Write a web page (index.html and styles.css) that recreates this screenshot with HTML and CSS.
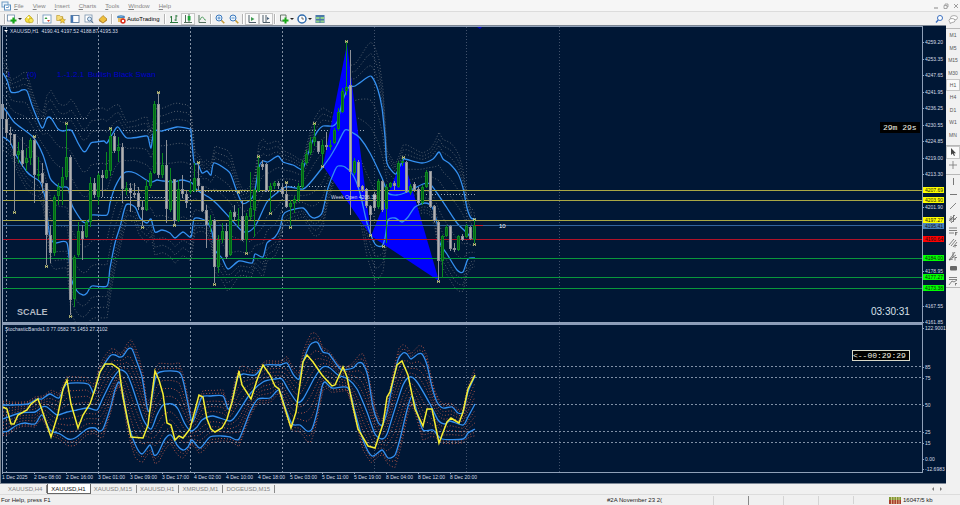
FILE: index.html
```html
<!DOCTYPE html>
<html lang="en">
<head>
<meta charset="UTF-8">
<meta name="viewport" content="width=device-width, initial-scale=1.0">
<title>XAUUSD,H1</title>
<link rel="stylesheet" href="styles.css">
</head>
<body>

<nav class="menu">
    <svg class="icon" viewBox="0 0 10 10"><rect x="1" y="1" width="6" height="5" fill="#eaf3fb" stroke="#6f9cc4"/><rect x="3.5" y="4" width="6" height="5" fill="#fff" stroke="#5b8fc0"/><path d="M5 7l1-1 1 1 1-2" fill="none" stroke="#3b78b5" stroke-width=".7"/></svg>
    <button><u>F</u>ile</button>
    <button><u>V</u>iew</button>
    <button><u>I</u>nsert</button>
    <button><u>C</u>harts</button>
    <button><u>T</u>ools</button>
    <button><u>W</u>indow</button>
    <button><u>H</u>elp</button>
    <div class="window-buttons">
        <button aria-label="Minimize"><svg viewBox="0 0 6 6"><path d="M1 5h4" stroke="#888" fill="none"/></svg></button>
        <button aria-label="Restore"><svg viewBox="0 0 6 6"><path d="M2 2V1h3v3H4M1 2.5h3v3H1z" stroke="#888" stroke-width=".7" fill="none"/></svg></button>
        <button aria-label="Close"><svg viewBox="0 0 6 6"><path d="M1 1l4 4M5 1L1 5" stroke="#888" stroke-width=".8" fill="none"/></svg></button>
    </div>
</nav>

<div class="toolbar">
    <span class="grip"></span>
    <button class="tool" aria-label="New chart"><svg class="icon" viewBox="0 0 10 10"><rect x=".5" y="1" width="7" height="6" fill="#fff" stroke="#6b8aa8" stroke-width=".8"/><path d="M6.5 3.5v6M3.5 6.5h6" stroke="#18a818" stroke-width="2.2"/></svg><i class="arrow"></i></button>
    <button class="tool" aria-label="Profiles"><svg class="icon" viewBox="0 0 10 10"><path d="M1 5l4-4 3 3-2 5-4-1z" fill="#f4df3a" stroke="#b59a1a" stroke-width=".6"/><circle cx="7" cy="6.5" r="2.3" fill="#f7e65a" stroke="#b59a1a" stroke-width=".6"/><circle cx="4.2" cy="3.5" r=".9" fill="#fff"/></svg></button>
    <span class="grip"></span>
    <button class="tool" aria-label="Market Watch"><svg class="icon" viewBox="0 0 10 10"><rect x="1" y="1" width="8" height="8" fill="#fff" stroke="#6b93ba" stroke-width=".8"/><path d="M2.5 5l1.5-2 1.5 2z" fill="#2a9a3a"/><path d="M5 6l1.5 2L8 6z" fill="#d2452c"/></svg></button>
    <button class="tool" aria-label="Data Window"><svg class="icon" viewBox="0 0 10 10"><path d="M.7 1.5h3l1 1h2v4h-6z" fill="#f6dc7a" stroke="#b38e22" stroke-width=".6"/><path d="M6.5 3.5l.9 2 2.1.2-1.6 1.4.5 2.1-1.9-1.1-1.9 1.1.5-2.1L3.5 5.7l2.1-.2z" fill="#f8cf3d" stroke="#a9821b" stroke-width=".5"/></svg></button>
    <button class="tool" aria-label="Navigator"><svg class="icon" viewBox="0 0 10 10"><rect x="1" y="1.5" width="8" height="7" fill="#fff" stroke="#55779c" stroke-width=".9"/><rect x="1" y="1.5" width="2.2" height="7" fill="#4477b4"/></svg></button>
    <button class="tool" aria-label="Terminal"><svg class="icon" viewBox="0 0 10 10"><rect x="1" y="1" width="7" height="7" fill="#fff" stroke="#7892ac" stroke-width=".8"/><circle cx="5.5" cy="5" r="2" fill="#dbeeff" stroke="#44688e" stroke-width=".8"/><path d="M7 6.5l2.2 2.6" stroke="#44688e"/></svg></button>
    <button class="tool" aria-label="Strategy Tester"><svg class="icon" viewBox="0 0 10 10"><path d="M1 5.5L5 1.5l4 3.5-4 4z" fill="#efbf3c" stroke="#98701a" stroke-width=".6"/><path d="M1 5.5l4 3.5 4-4v1.5l-4 3-4-2.5z" fill="#b97f1c"/></svg></button>
    <span class="grip"></span>
    <button class="tool auto"><svg class="icon" viewBox="0 0 10 10"><ellipse cx="5" cy="3" rx="4" ry="1.8" fill="#4b86bc"/><path d="M2 4h6v4H2z" fill="#e7bd63"/><path d="M3 3q2-3 4 0z" fill="#6fa9da"/><circle cx="7" cy="7" r="2.7" fill="#dd3424"/><path d="M6 6h2v2H6z" fill="#fff"/></svg>AutoTrading</button>
    <span class="grip"></span>
    <button class="tool" aria-label="Bar chart"><svg class="icon" viewBox="0 0 10 10"><path d="M1 8.5h8M2.5 2v7M1 3h1.5M7 1v6M7 2h1.5M5.5 6H7" stroke="#2c7a3f" fill="none"/></svg></button>
    <button class="tool active" aria-label="Candlesticks"><svg class="icon" viewBox="0 0 10 10"><path d="M1 8.5h8M2.5 1v8M6 0v8" stroke="#54705e" fill="none"/><rect x="4.7" y="2" width="2.8" height="4.5" fill="#1fa93a"/></svg></button>
    <button class="tool" aria-label="Line chart"><svg class="icon" viewBox="0 0 10 10"><path d="M2 1v7.5h7" stroke="#54705e" fill="none"/><path d="M3 6q2-5 3.5-2T9 6" stroke="#3f9450" fill="none" stroke-width=".8"/></svg></button>
    <span class="grip"></span>
    <button class="tool" aria-label="Zoom in"><svg class="icon" viewBox="0 0 10 10"><path d="M6.300 6.300l3 3" stroke="#c69a35" stroke-width="1.6"/><circle cx="4" cy="4" r="3" fill="#e9f4fd" stroke="#3b78bd"/><path d="M2.5 4h3M4 2.5v3" stroke="#3b78bd" stroke-width=".8"/></svg></button>
    <button class="tool" aria-label="Zoom out"><svg class="icon" viewBox="0 0 10 10"><path d="M6.300 6.300l3 3" stroke="#c69a35" stroke-width="1.6"/><circle cx="4" cy="4" r="3" fill="#e9f4fd" stroke="#3b78bd"/><path d="M2.5 4h3" stroke="#3b78bd" stroke-width=".8"/></svg></button>
    <span class="grip"></span>
    <button class="tool active" aria-label="Auto scroll"><svg class="icon" viewBox="0 0 10 10"><path d="M2 1v7.5h7" stroke="#4f5f6a" fill="none"/><path d="M4 3l3.5 2L4 7z" fill="#3e9c50"/></svg></button>
    <button class="tool active" aria-label="Chart shift"><svg class="icon" viewBox="0 0 10 10"><path d="M2 1v7.5h7M5 1v7" stroke="#4f5f6a" fill="none"/><path d="M6 3l2.5 1.5L6 6z" fill="#45607c"/></svg></button>
    <span class="grip"></span>
    <button class="tool wide" aria-label="Indicators"><svg class="icon" viewBox="0 0 10 10"><path d="M1.5 1v6H5M1.5 1H7v3" stroke="#5c6d60" fill="none" stroke-width=".9"/><path d="M6.5 3.5v6M3.5 6.5h6" stroke="#18a818" stroke-width="2"/></svg><i class="arrow"></i></button>
    <button class="tool wide" aria-label="Periods"><svg class="icon" viewBox="0 0 10 10"><circle cx="5" cy="5" r="4" fill="#fff" stroke="#2f6cae" stroke-width="1.5"/><path d="M5 2.8V5h2" stroke="#333" fill="none" stroke-width=".7"/></svg><i class="arrow"></i></button>
    <button class="tool" aria-label="Templates"><svg class="icon" viewBox="0 0 10 10"><rect x=".5" y="1" width="9" height="8" fill="#4b79aa"/><path d="M1 3h3.5v2H1zM5.5 3H9v2H5.5zM1 6.5h3.5v2H1zM5.5 6.5H9v2H5.5z" fill="#8fd08a"/></svg></button>
    <div class="toolbar-right">
        <button class="tool" aria-label="Search"><svg class="icon" viewBox="0 0 10 10"><circle cx="6" cy="4" r="2.5" fill="#fff" stroke="#3b6fc0"/><path d="M4.2 6L2 8.5" stroke="#3b6fc0" stroke-width="1.4"/></svg></button>
        <button class="tool" aria-label="Chat"><svg class="icon" viewBox="0 0 10 10"><ellipse cx="6" cy="3.8" rx="3.5" ry="2.2" fill="#fff" stroke="#8a8a8a" stroke-width=".7"/><path d="M1 6.5q0-2 3-2t3 2q0 2-3 2L2 9.5V8Q1 7.5 1 6.5z" fill="#fff" stroke="#8a8a8a" stroke-width=".7"/></svg></button>
    </div>
</div>

<main class="workspace">
    <div class="chart-window">
        <svg class="chart" viewBox="0 25 946 458" role="img" aria-label="XAUUSD H1 chart">
            <rect class="back" x="0" y="25" width="946" height="458"/>
            <path class="edge" d="M0 25.500H946M.5 25V483"/>

            <!-- day separators and levels -->
            <path class="day" d="M6.500 27V472M98.500 27V472M190.500 27V472M282.500 27V472"/>
            <path class="day faint" d="M374.500 27V472M466.500 27V472M559.500 27V472"/>
            <path class="open" d="M8 118.500H89M6 130.500H366M98 197.500H190M190 191.500H282M282 186.500H326M423 194.500H476"/>
            <g id="bands"></g>
            <g class="pattern">
                <path d="M323 166L347 44L371 236Z"/>
                <path d="M371 236L403 157L439 281Z"/>
            </g>
            <g id="bandLines"></g>
            <g class="level">
                <path class="yellow" d="M3 190.500H922M3 200.500H922M3 220.500H922"/>
                <path class="blue" d="M3 225.500H922"/>
                <path class="red" d="M3 239.500H922"/>
                <path class="green" d="M3 258.500H922M3 277.500H922M3 288.500H922"/>
            </g>
            <g id="candles"></g>
            <path class="ask" d="M475 225.500H483"/>

            <!-- indicator window -->
            <path class="grid" d="M3 366.500H922M3 377.500H922M3 404.500H922M3 431.500H922M3 442.500H922"/>
            <g id="stochastic"></g>

            <path class="frame" d="M2.500 472V26.500H922.500V472.500H2.500M2 322.500H922"/>
            <path class="splitter" d="M2 324H922"/>
            <path class="frame" id="ticks"/>

            <polygon points="4,30 8,30 6,32" fill="#fff"/>
            <text class="small" x="10" y="33">XAUUSD,H1&#160; 4190.41 4197.52 4188.87 4195.33</text>
            <text class="small" x="5" y="331">StochasticBands1.0 77.0582 75.1453 27.2102</text>
            <g class="swan">
                <text x="8" y="77">I</text>
                <text x="27" y="77">(0)</text>
                <text x="57" y="77">1.-1.2.1</text>
                <text x="88" y="77">Bullish Black Swan</text>
            </g>
            <polygon points="477,27 482,27 480,29" fill="#0000c8"/>
            <text class="small" x="331" y="199">Week Open 4206.38</text>
            <text class="bar-count" x="499" y="228">10</text>
            <text class="scale" x="17" y="315">SCALE</text>
            <text class="clock" x="871" y="315">03:30:31</text>
            <rect x="880" y="122" width="40" height="11" fill="#000"/>
            <text class="mono" x="883" y="130">29m 29s</text>
            <rect x="852.500" y="350.500" width="57" height="10" fill="#000" stroke="#d8d8c8"/>
            <text class="mono" x="853" y="358">&lt;--00:29:29</text>
            <g id="axis"></g>
        </svg>

        <div class="tabs">
            <button>XAUUSD,H4</button>
            <button class="current">XAUUSD,H1</button>
            <button>XAUUSD,M15</button>
            <button>XAUUSD,H1</button>
            <button>XMRUSD,M1</button>
            <button>DOGEUSD,M15</button>
            <span class="tab-scroll"><i class="left"></i><i class="right"></i></span>
        </div>
    </div>

    <aside class="side">
        <div class="periods">
            <button>M1</button>
            <button>M5</button>
            <button>M15</button>
            <button>M30</button>
            <button class="active">H1</button>
            <button>H4</button>
            <button>D1</button>
            <button>W1</button>
            <button>MN</button>
        </div>
        <div class="pointers">
            <button class="active" aria-label="Cursor"><svg class="icon" viewBox="0 0 10 10"><path d="M3 1v7l1.7-1.5L6 9l1-.5-1.200-2.300H8z" fill="#444"/></svg></button>
            <button aria-label="Crosshair"><svg class="icon" viewBox="0 0 10 10"><path d="M5 1v8M1 5h8" stroke="#777" stroke-width=".8"/></svg></button>
        </div>
        <div class="lines">
            <button aria-label="Vertical line"><svg class="icon" viewBox="0 0 10 10"><path d="M5.5 2v7" stroke="#777"/></svg></button>
            <button aria-label="Horizontal line"><svg class="icon" viewBox="0 0 10 10"><path d="M2 5.5h7" stroke="#777"/></svg></button>
            <button aria-label="Trendline"><svg class="icon" viewBox="0 0 10 10"><path d="M2 8l6-6" stroke="#777" stroke-width=".9"/></svg></button>
            <button aria-label="Channel"><svg class="icon" viewBox="0 0 10 10"><path d="M1 7l6-6M3 9l6-6M3 2v6M5.5 1v7M1 5h7" stroke="#666" stroke-width=".8"/></svg></button>
            <button aria-label="Fibonacci"><svg class="icon" viewBox="0 0 10 10"><path d="M1 2h8M1 4.5h8M1 7h5M7.5 6v3.5M7.5 6.5h2M7.5 8H9" stroke="#666" stroke-width=".8"/></svg></button>
            <button aria-label="Equidistant channel"><svg class="icon" viewBox="0 0 10 10"><path d="M1 7l5-6M3 8l5-6M5 9l4-5M7 7v2.5M7 7.5h2" stroke="#666" stroke-width=".8"/></svg></button>
            <button aria-label="Fan"><svg class="icon" viewBox="0 0 10 10"><path d="M1 9l6-8M1 9l7-5M1 9l4-1M7 6v3.5M7 6.5h2M5 1v6" stroke="#666" stroke-width=".8"/></svg></button>
            <button aria-label="Rectangle"><svg class="icon" viewBox="0 0 10 10"><rect x="2" y="3" width="7" height="4.5" rx="1" fill="#666"/></svg></button>
            <button aria-label="Retracement"><svg class="icon" viewBox="0 0 10 10"><path d="M1 1.5h8M1 3.5h8M1 9l3-4 2 1 3-2M7.5 7v2.5M7.5 7.5H9" fill="none" stroke="#666" stroke-width=".8"/></svg></button>
        </div>
    </aside>
</main>

<footer class="status">
    <span class="help">For Help, press F1</span>
    <span class="profile">#2A November 23 2(</span>
    <span class="cell"></span>
    <span class="cell dark"></span>
    <span class="cell"></span>
    <span class="cell"></span>
    <span class="connection">
        <svg viewBox="0 0 12 7"><path d="M0 0h12v7H0z" fill="#a5402c"/><path d="M0 0h12v3H0z" fill="#7f9a35"/><path d="M2.5 0v7M5 0v7M7.5 0v7M10 0v7" stroke="#f3d9b0" stroke-width=".7"/></svg>
        16047/5 kb
    </span>
</footer>

<script src="chart.js"></script>
</body>
</html>
```
FILE: styles.css
```css
* {
    box-sizing: border-box;
}

body {
    margin: 0;
    min-height: 100vh;
    display: flex;
    flex-direction: column;
    background-color: #f0f0f0;
    font-family: "Liberation Sans", Arial, sans-serif;
    font-size: 6px;
    line-height: 8px;
    color: #222;
}

button {
    margin: 0;
    padding: 0;
    border: 0;
    background: none;
    font: inherit;
    color: inherit;
    white-space: nowrap;
}

.icon {
    width: 10px;
    height: 10px;
    flex: none;
}

/* Menu */
.menu {
    height: 11px;
    display: flex;
    align-items: center;
    gap: 9px;
    padding-left: 1px;
    background-color: #f6f6f6;
    color: #858585;
}

.menu .icon {
    margin-right: -6px;
}

.window-buttons {
    margin-left: auto;
    padding-right: 1px;
    display: flex;
    gap: 4px;
}

.window-buttons svg {
    display: block;
    width: 6px;
    height: 6px;
}

/* Toolbar */
.toolbar {
    height: 14px;
    display: flex;
    align-items: center;
    padding-left: 3px;
    background-color: #f1f1f1;
    border-top: 1px solid #dcdcdc;
}

.grip {
    width: 2px;
    height: 10px;
    margin: 0 1px;
    border-left: 1px solid #b4b4b4;
    border-right: 1px solid #fff;
}

.tool {
    min-width: 14px;
    height: 12px;
    display: flex;
    align-items: center;
    justify-content: center;
}

.tool.wide {
    min-width: 18px;
}

.tool.active {
    background-color: #fafafa;
    border: 1px solid #c6c6c6;
}

.auto {
    gap: 1px;
    padding: 0 4px 0 2px;
    color: #000;
}

.arrow {
    margin-left: 1px;
    border: 2px solid transparent;
    border-top-color: #222;
    border-bottom: 0;
}

.toolbar-right {
    margin-left: auto;
    display: flex;
}

/* Chart window */
.workspace {
    flex: 1;
    display: flex;
}

.chart-window {
    flex: 1;
    min-width: 0;
}

.chart {
    display: block;
    width: 100%;
    height: auto;
    font-family: "Liberation Sans", Arial, sans-serif;
}

.chart path {
    fill: none;
}

.chart .back {
    fill: #001735;
}

.edge {
    stroke: #7d8794;
}

.frame {
    stroke: #8fa0b8;
    shape-rendering: crispEdges;
}

.splitter {
    stroke: #8b9cb8;
    stroke-width: 2;
}

.day {
    stroke: #8290a3;
    stroke-dasharray: 2 2;
}

.day.faint {
    stroke: #41516a;
    stroke-dasharray: 1 2;
}

.open {
    stroke: #9eabba;
    stroke-dasharray: 1 2;
}

.grid {
    stroke: #8090a6;
    stroke-dasharray: 2 2;
}

.chart .pattern path {
    fill: #0000ff;
}

.yellow { stroke: #aaa845; }
.blue { stroke: #32649c; }
.red { stroke: #b01228; }
.green { stroke: #08983c; }

.ask {
    stroke: #c02030;
}

.band {
    stroke: #3490f0;
    stroke-width: 1.3;
}

.inner {
    stroke: #777d82;
    stroke-width: .7;
    stroke-dasharray: 1 2;
}

.inner.hot {
    stroke: #c05a4a;
    stroke-width: .9;
}

.signal {
    stroke: #f5ee32;
    stroke-width: 1.5;
}

.up {
    fill: #075f18;
    stroke: #0b8a20;
}

.down {
    fill: #b2b2b2;
    stroke: #8c9098;
}

.chart .star {
    stroke: #c8c878;
    stroke-width: .8;
}

.small,
.tick {
    font-size: 5px;
    fill: #d6dde6;
}

.tick.tagged {
    fill: #151515;
}

.swan text {
    font-size: 8px;
    fill: #0000cc;
}

.bar-count {
    font-size: 6px;
    fill: #fff;
}

.scale {
    font-size: 9px;
    font-weight: bold;
    fill: #b4bac4;
}

.clock {
    font-size: 10px;
    fill: #d8e0ea;
}

.mono {
    font-family: "Liberation Mono", monospace;
    font-size: 8px;
    fill: #f2f2e6;
}

/* Tabs under the chart */
.tabs {
    height: 11px;
    display: flex;
    align-items: center;
    padding-left: 5px;
    border-top: 1px solid #7c8796;
    color: #858585;
}

.tabs button {
    height: 8px;
    padding: 0 4px 0 3px;
    border-right: 1px solid #8a8a8a;
}

.tabs .current {
    height: 10px;
    background-color: #fff;
    border: 1px solid #666;
    border-top: 0;
    color: #111;
}

.tab-scroll {
    margin-left: auto;
    padding-right: 4px;
    display: flex;
    gap: 6px;
}

.tab-scroll i {
    border: 2px solid transparent;
}

.tab-scroll .left {
    border-left: 0;
    border-right-color: #777;
}

.tab-scroll .right {
    border-right: 0;
    border-left-color: #777;
}

/* Periods and line tools */
.side {
    width: 14px;
    padding-top: 3px;
    background-color: #f1f1f1;
    color: #555;
    font-size: 5px;
}

.side > div {
    display: grid;
    grid-auto-rows: 1fr;
    border-top: 1px solid #b8b8b8;
}

.side button {
    display: flex;
    align-items: center;
    justify-content: center;
}

.side .active {
    background-color: #fafafa;
    border: 1px solid #c6c6c6;
}

.periods {
    height: 113px;
    margin-bottom: 4px;
}

.pointers {
    height: 26px;
    margin-bottom: 3px;
}

.lines {
    height: 114px;
    border-bottom: 1px solid #b8b8b8;
}

/* Status bar */
.status {
    height: 11px;
    display: flex;
    align-items: center;
    padding-left: 1px;
    border-top: 1px solid #dcdcdc;
}

.help {
    flex: 1;
}

.profile {
    width: 106px;
}

.cell {
    width: 35px;
    height: 9px;
    border-left: 1px solid #d4d4d4;
}

.cell.dark {
    border-left-color: #888;
}

.connection {
    width: 107px;
    padding-left: 35px;
    display: flex;
    align-items: center;
    gap: 2px;
    border-left: 1px solid #d4d4d4;
    white-space: nowrap;
}

.connection svg {
    width: 12px;
    height: 7px;
}
```
FILE: chart.js
```js
// one row per bar: direction, high, low, body top, body bottom
var bars = [
    'd 95 130 104 119', 'd 112 138 119 133', 'd 127 145 133 135', 'd 134 211 134 156', 'u 142 163 151 155',
    'd 137 167 150 164', 'u 148 171 158 163', 'u 138 165 140 158', 'd 137 203 140 175', 'u 157 180 174 176',
    'd 163 193 173 183', 'd 183 265 183 235', 'd 225 263 235 253', 'u 195 256 197 253', 'u 183 205 187 196',
    'u 168 205 177 187', 'u 124 180 157 177', 'd 155 315 157 300', 'u 255 307 257 299', 'u 222 257 231 255',
    'd 225 260 231 239', 'u 220 238 222 237', 'u 177 227 183 222', 'd 178 198 183 195', 'u 173 205 175 197',
    'd 170 197 175 178', 'u 152 179 170 178', 'u 129 176 136 171', 'd 133 153 136 151', 'u 137 162 147 151',
    'd 143 203 147 189', 'u 182 195 188 189', 'd 183 212 188 193', 'd 183 198 193 194', 'd 187 210 193 207',
    'd 200 226 207 210', 'u 180 211 186 210', 'u 171 188 173 186', 'u 101 174 104 173', 'd 93 178 104 175',
    'u 153 178 165 175', 'd 140 223 165 209', 'u 168 212 180 210', 'd 179 225 179 221', 'u 180 222 189 221',
    'd 175 197 189 194', 'd 190 208 194 203', 'u 182 194 190 191', 'u 163 192 178 191', 'd 163 190 178 186',
    'd 186 212 186 211', 'd 205 248 210 225', 'u 215 232 220 225', 'd 219 283 220 267', 'u 235 273 240 267',
    'u 223 243 231 240', 'd 223 259 231 257', 'u 210 256 212 255', 'd 205 220 212 217', 'u 208 227 219 220',
    'd 200 241 216 240', 'u 213 252 216 240', 'u 172 220 208 217', 'u 188 237 190 210', 'u 157 192 167 191',
    'd 160 170 164 167', 'd 163 192 164 191', 'u 183 212 186 190', 'u 181 189 183 186', 'd 181 189 183 186',
    'd 185 197 187 194', 'd 183 208 194 207', 'u 200 226 203 207', 'u 196 213 199 203', 'u 183 202 186 200',
    'u 160 189 163 187', 'u 150 165 154 163', 'u 137 155 142 153', 'u 124 146 137 142', 'd 141 154 141 152',
    'u 140 165 145 154', 'd 132 150 145 147', 'u 140 150 145 147', 'u 128 144 130 143', 'u 108 131 112 129',
    'u 88 113 91 112', 'u 42 95 87 91', 'd 50 215 85 172', 'u 158 175 161 173', 'd 160 188 162 187',
    'd 185 192 186 190', 'd 188 208 189 206', 'd 205 234 206 215', 'd 192 211 194 208', 'u 179 209 181 207',
    'd 180 212 181 210', 'u 184 243 187 209', 'u 182 188 183 187', 'd 181 190 183 186', 'u 161 188 163 187',
    'u 158 166 161 163', 'd 161 193 162 192', 'u 184 195 186 193', 'd 182 192 184 190', 'd 187 205 189 203',
    'u 185 205 187 203', 'u 170 188 172 187', 'd 171 208 171 207', 'd 205 222 206 221', 'd 221 280 222 261',
    'u 235 278 236 261', 'u 225 237 227 236', 'd 225 251 226 249', 'd 243 252 248 249', 'u 235 251 236 250',
    'd 234 241 236 240', 'u 224 238 226 237', 'd 226 240 227 239', 'u 220 243 225 240'
];

var stars = [[14, 212], [34, 136], [46, 266], [66, 123], [70, 316], [110, 128], [142, 227], [158, 92],
    [174, 225], [198, 162], [214, 284], [246, 253], [258, 156], [238, 192], [270, 213], [286, 182], [290, 227],
    [314, 123], [322, 166], [346, 41], [370, 235], [383, 246], [403, 157], [438, 281], [474, 219], [474, 244]];

var priceBands = {
    upper: '3,73 7,80 11,92 18,92 22,90 27,91 33,108 42,128 47,118 51,118 58,129 63,131 68,130 72,131 78,143 83,151 86,151 91,143 96,142 104,141 107,143 113,133 118,127 127,138 145,136 148,137 151,148 154,131 162,131 177,127 190,129 191,132 194,162 198,164 202,173 207,171 211,175 214,163 227,170 231,175 237,192 242,203 246,203 252,198 255,190 259,167 263,161 268,162 278,156 283,162 293,165 300,169 303,169 307,157 313,140 317,132 323,126 333,126 338,120 342,103 347,90 350,86 355,86 368,77 372,77 378,90 382,108 385,137 387,163 395,174 398,170 403,160 405,159 422,163 433,159 439,152 443,159 450,164 458,174 463,188 467,208 471,218 475,219',
    middle: '3,107 7,112 15,123 33,137 43,155 50,178 55,184 60,187 68,188 72,205 82,221 88,222 92,215 107,215 110,203 115,187 124,173 135,173 150,182 157,180 163,181 173,182 182,180 192,183 197,190 210,198 217,204 230,218 242,231 250,231 257,223 267,202 278,192 283,188 290,187 303,189 310,183 322,168 330,157 337,145 345,130 353,133 360,138 370,153 382,178 388,193 397,195 407,192 423,184 430,184 437,193 447,208 457,223 467,233 472,239 475,239',
    lower: '3,137 10,142 17,157 27,172 33,177 40,182 45,197 47,213 50,237 55,243 67,243 71,278 77,291 83,295 87,293 92,286 107,286 110,268 115,243 120,227 126,205 135,207 140,218 147,223 151,219 155,232 162,230 170,233 175,238 183,232 191,237 194,219 202,219 208,223 212,232 215,250 222,258 228,269 239,261 252,263 255,254 263,257 267,243 275,237 280,228 283,215 288,211 303,208 310,216 315,218 322,213 328,188 335,170 338,166 345,167 353,175 360,193 367,223 375,244 382,246 385,238 388,220 395,218 402,222 408,217 415,207 425,203 432,207 437,223 440,243 447,254 457,270 463,272 468,259 475,258'
};

var stochBands = {
    upper: '3,405 13,405 28,404 37,399 42,399 50,394 59,398 67,384 88,384 94,393 100,372 110,356 115,355 119,357 123,356 128,349 132,349 137,362 142,377 147,407 150,410 155,380 160,372 180,373 187,399 192,422 197,410 202,397 210,396 223,396 228,409 232,402 237,379 243,374 255,375 265,365 280,365 287,363 293,374 299,379 303,362 310,345 315,342 318,343 323,352 329,354 337,365 342,370 353,368 358,363 363,364 368,377 373,407 378,422 382,425 387,412 393,382 398,360 403,353 407,354 411,359 418,354 422,354 427,365 432,387 437,402 443,408 452,407 458,413 463,412 468,392 475,376',
    middle: '3,419 20,413 35,412 42,407 47,407 57,415 67,412 77,410 88,408 97,410 102,400 112,380 120,370 127,374 133,389 143,419 151,429 157,415 163,405 172,404 178,409 185,424 191,431 197,427 202,420 213,416 230,421 237,414 250,394 263,382 275,379 282,379 288,389 297,402 303,399 315,377 323,367 330,368 338,375 348,379 357,389 367,412 375,434 382,439 387,434 393,415 403,385 410,377 417,382 430,404 438,420 445,424 450,421 463,425 468,417 475,404',
    lower: '3,432 8,431 17,425 25,423 35,424 42,415 50,430 60,434 68,439 75,438 87,429 95,428 99,431 103,429 110,409 115,390 119,382 123,394 128,422 135,444 142,454 150,445 154,455 158,453 165,439 171,435 177,445 183,450 188,447 192,440 200,448 210,437 222,436 230,437 239,439 250,412 258,399 270,398 279,390 285,407 292,424 300,425 307,431 312,429 317,412 322,387 325,382 332,388 348,388 355,412 363,440 372,456 382,450 388,458 395,455 400,439 407,410 412,396 417,412 423,430 433,430 442,439 463,439 468,433 475,429'
};

var signal = '3,407 7,409 11,424 14,424 18,415 27,410 31,404 38,399 42,410 51,437 58,414 63,389 67,380 71,404 78,428 83,415 90,404 95,389 100,372 105,364 112,364 119,369 123,397 131,437 143,438 148,425 151,402 155,371 159,380 163,394 167,423 171,425 175,440 179,436 183,438 190,429 199,395 203,397 207,419 211,429 215,432 222,428 227,419 232,402 239,371 242,385 251,399 257,380 263,365 270,375 275,386 279,389 283,402 291,428 296,412 303,362 307,355 313,362 322,375 332,386 335,385 343,367 347,377 352,402 358,429 368,446 375,448 383,424 387,397 390,392 397,365 402,361 408,375 415,409 423,426 427,409 432,409 439,443 447,422 451,418 459,423 463,412 468,389 475,375';

var prices = [['4259.20', 42], ['4253.35', 59], ['4247.65', 75], ['4241.95', 92], ['4236.25', 108], ['4230.55', 125],
    ['4224.85', 141], ['4219.00', 158], ['4213.30', 174], ['4201.90', 207], ['4178.95', 271], ['4167.55', 306],
    ['4161.85', 322], ['122.9001', 328], ['85', 367], ['75', 378], ['50', 405], ['25', 432], ['15', 443],
    ['0.00', 459], ['-12.6983', 469]];

var tags = [['4207.69', 190, '#ffff00'], ['4203.90', 200, '#ffff00'], ['4195.41', 226, '#4a82bd'],
    ['4197.27', 220, '#ffff00'], ['4190.64', 239, '#ff0000'], ['4184.00', 258, '#00ff00'],
    ['4177.27', 277, '#00ff00'], ['4173.38', 288, '#00ff00']];

var times = ['1 Dec 2025', '2 Dec 08:00', '2 Dec 16:00', '3 Dec 01:00', '3 Dec 09:00', '3 Dec 17:00',
    '4 Dec 02:00', '4 Dec 10:00', '4 Dec 18:00', '5 Dec 03:00', '5 Dec 11:00', '5 Dec 19:00',
    '8 Dec 04:00', '8 Dec 12:00', '8 Dec 20:00'];

function add(parent, name, attrs, text) {
    var el = document.createElementNS('http://www.w3.org/2000/svg', name);
    for (var key in attrs) {
        el.setAttribute(key, attrs[key]);
    }
    if (text) {
        el.textContent = text;
    }
    document.getElementById(parent).appendChild(el);
}

function parse(points) {
    return points.split(' ').map(function (p) {
        return p.split(',').map(Number);
    });
}

// height of a line at x
function valueAt(line, x) {
    for (var i = 1; i < line.length; i++) {
        if (x <= line[i][0]) {
            var a = line[i - 1], b = line[i];
            return a[1] + (b[1] - a[1]) * (x - a[0]) / (b[0] - a[0]);
        }
    }
    return line[line.length - 1][1];
}

// rounded path through the points
function smooth(points) {
    var p = parse(points);
    var d = 'M' + p[0].join(' ');
    for (var i = 0; i < p.length - 1; i++) {
        var before = p[i - 1] || p[i], a = p[i], b = p[i + 1], after = p[i + 2] || b;
        d += 'C' + [
            a[0] + (b[0] - before[0]) / 8, a[1] + (b[1] - before[1]) / 8,
            b[0] - (after[0] - a[0]) / 8, b[1] - (after[1] - a[1]) / 8,
            b[0], b[1]
        ].join(' ');
    }
    return d;
}

function drawBands(set, innerId, lineId, cls, ratios) {
    var middle = parse(set.middle);
    [set.upper, set.lower].forEach(function (side) {
        var outer = parse(side);
        ratios.forEach(function (r) {
            var d = '';
            for (var x = 3; x <= 475; x += 4) {
                var m = valueAt(middle, x);
                var y = m + (valueAt(outer, x) - m) * r;
                d += (d ? 'L' : 'M') + x + ' ' + y.toFixed(1);
            }
            add(innerId, 'path', { d: d, 'class': cls });
        });
    });
    [set.upper, set.middle, set.lower].forEach(function (line) {
        add(lineId, 'path', { d: smooth(line), 'class': 'band' });
    });
}

drawBands(priceBands, 'bands', 'bandLines', 'inner', [0.35, 0.7, 1.15, 1.3, 1.45]);
drawBands(stochBands, 'stochastic', 'stochastic', 'inner hot', [0.25, 0.5, 0.75, 1.13, 1.27]);
add('stochastic', 'path', { d: 'M' + signal.replace(/ /g, 'L'), 'class': 'signal' });

bars.forEach(function (row, i) {
    var b = row.split(' ');
    var x = 2 + i * 4;
    var cls = b[0] === 'u' ? 'up' : 'down';
    add('candles', 'path', { d: 'M' + (x + 0.5) + ' ' + b[1] + 'V' + b[2], 'class': cls });
    add('candles', 'rect', {
        x: x - 0.5, y: +b[3] + 0.5, width: 2, height: Math.max(1, b[4] - b[3] - 1), 'class': cls
    });
});

stars.forEach(function (s) {
    add('candles', 'path', {
        d: 'M' + (s[0] - 1) + ' ' + (s[1] - 1) + 'l3 3m0 -3l-3 3M' + (s[0] - 1) + ' ' + (s[1] + 0.5) + 'h3',
        'class': 'star'
    });
});

var ticks = '';
prices.forEach(function (p) {
    ticks += 'M922 ' + (p[1] + 0.5) + 'h2';
    add('axis', 'text', { x: 925, y: p[1] + 2, 'class': 'tick' }, p[0]);
});
tags.forEach(function (t) {
    add('axis', 'rect', { x: 923, y: t[1] - 3, width: 21, height: 6, fill: t[2] });
    add('axis', 'text', { x: 925, y: t[1] + 2, 'class': 'tick tagged' }, t[0]);
});
times.forEach(function (t, i) {
    ticks += 'M' + (2.5 + i * 32) + ' 472v2';
    add('axis', 'text', { x: 2 + i * 32, y: 479, 'class': 'tick' }, t);
});
document.getElementById('ticks').setAttribute('d', ticks);
```
